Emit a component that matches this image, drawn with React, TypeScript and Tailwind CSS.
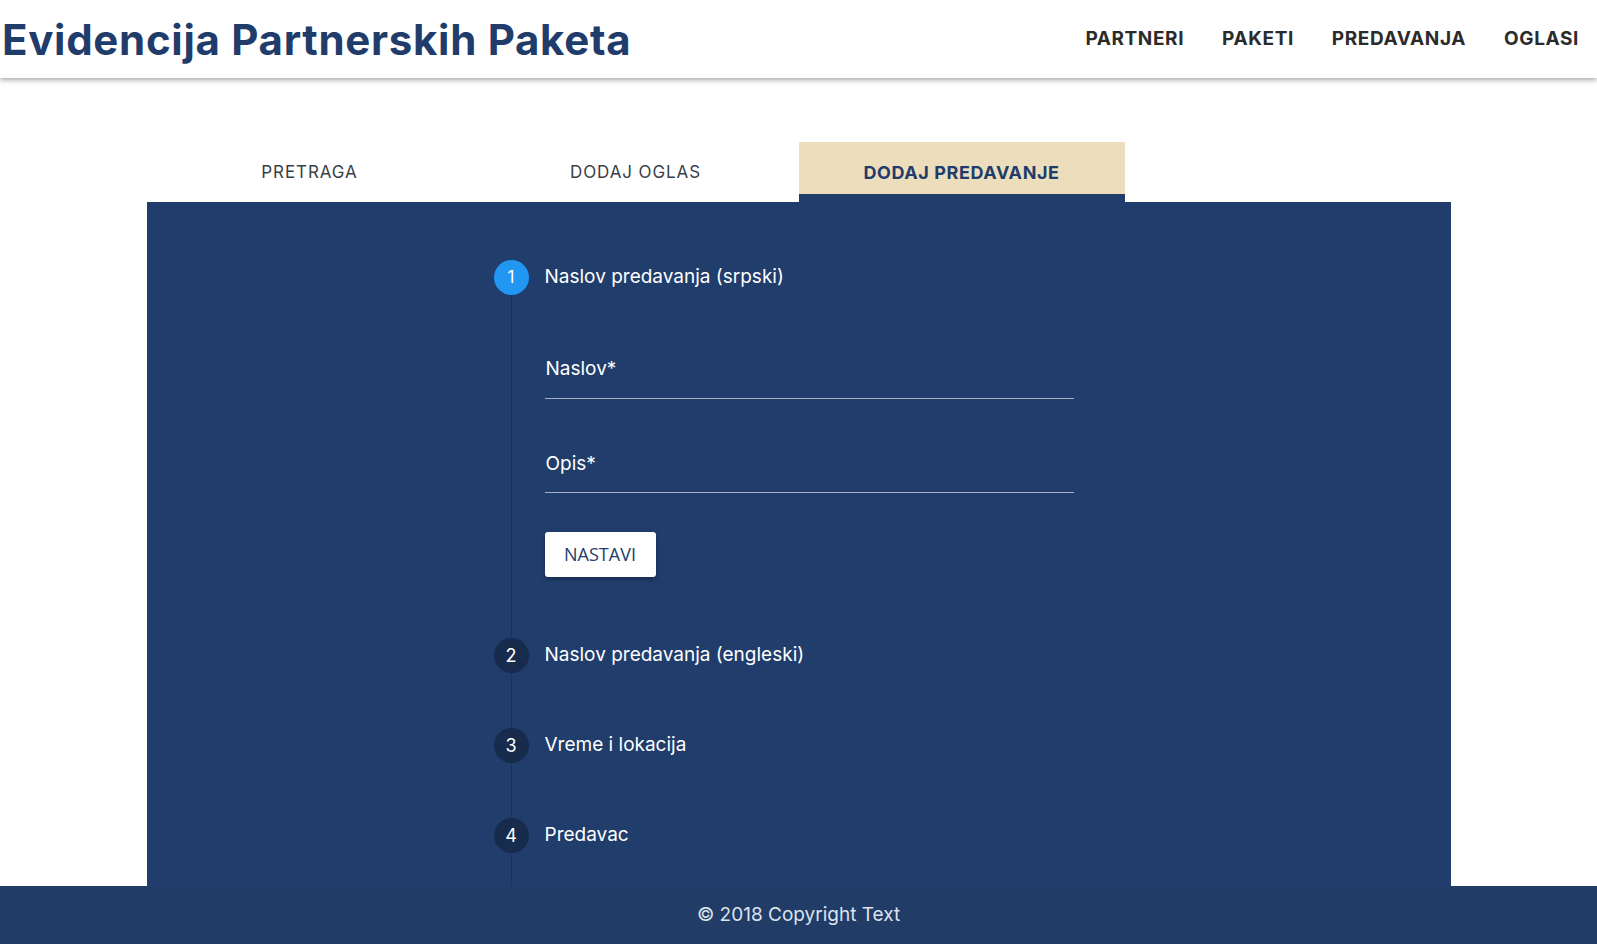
import React from "react";

const steps = [
  { n: 2, label: "Naslov predavanja (engleski)" },
  { n: 3, label: "Vreme i lokacija" },
  { n: 4, label: "Predavac" },
];

export default function App() {
  return (
    <div className="h-[944px] flex flex-col overflow-hidden bg-white font-['Inter',sans-serif]">
      {/* Header */}
      <header className="h-[78px] shrink-0 flex items-center justify-between pl-[2px] pr-[18px] bg-white shadow-[0_2px_5px_rgba(0,0,0,0.35)] relative z-10">
        <h1 className="text-[42px] font-bold text-[#1f3c6a] tracking-[0.7px]">
          Evidencija Partnerskih Paketa
        </h1>
        <nav className="flex items-center gap-[38px] text-[19px] font-bold text-[#2b2b2b] tracking-[0.6px]">
          <a>PARTNERI</a>
          <a>PAKETI</a>
          <a>PREDAVANJA</a>
          <a>OGLASI</a>
        </nav>
      </header>

      {/* Main Content */}
      <main className="flex-1 overflow-hidden pt-[64px]">
        <div className="w-[1304px] mx-auto">
          <div className="grid grid-cols-4 h-[60px] text-[17px]">
            <button className="flex items-center justify-center pt-[2px] text-[#3a3f4a] tracking-[0.9px]">
              PRETRAGA
            </button>
            <button className="flex items-center justify-center pt-[2px] text-[#3a3f4a] tracking-[0.9px]">
              DODAJ OGLAS
            </button>
            <button className="relative flex items-center justify-center bg-[#ecdebc] font-bold text-[#1f3c6a] text-[18px] tracking-[0.6px]">
              DODAJ PREDAVANJE
              <span className="absolute left-0 right-0 bottom-0 h-[8px] bg-[#203d6b]" />
            </button>
          </div>

          <div className="bg-[#203d6b] h-[700px] pt-[58px] pl-[347px]">
            {/* Step 1 */}
            <div className="flex items-center gap-[16px]">
              <div className="w-[35px] h-[35px] rounded-full bg-[#2196f3] flex items-center justify-center text-white text-[17px]">
                1
              </div>
              <span className="text-white text-[19px]">Naslov predavanja (srpski)</span>
            </div>
            <div className="ml-[17px] border-l border-[#1a3358] pl-[33px] pt-[60px] pb-[61px]">
              <div className="w-[529px]">
                <div className="border-b border-[#a9b2bf] pb-[14px]">
                  <span className="text-white text-[19px] pl-[1px]">Naslov*</span>
                </div>
                <div className="border-b border-[#a9b2bf] pb-[14px] mt-[51px]">
                  <span className="text-white text-[19px] pl-[1px]">Opis*</span>
                </div>
              </div>
              <button className="mt-[39px] w-[111px] h-[45px] bg-white rounded-[3px] shadow-[0_2px_4px_rgba(0,0,0,0.3)] text-[#1f3c6a] text-[18px] font-['Open_Sans',sans-serif]">
                NASTAVI
              </button>
            </div>

            {steps.map((s) => (
              <div key={s.n}>
                <div className="flex items-center gap-[16px]">
                  <div className="w-[35px] h-[35px] rounded-full bg-[#172b4d] flex items-center justify-center text-white text-[18px]">
                    {s.n}
                  </div>
                  <span className="text-white text-[19px]">{s.label}</span>
                </div>
                <div className="ml-[17px] border-l border-[#1a3358] h-[55px]" />
              </div>
            ))}
          </div>
        </div>
      </main>

      {/* Footer */}
      <footer className="h-[58px] shrink-0 bg-[#213c67] flex items-center justify-center">
        <span className="text-[#dde3ec] text-[19px]">© 2018 Copyright Text</span>
      </footer>
    </div>
  );
}
